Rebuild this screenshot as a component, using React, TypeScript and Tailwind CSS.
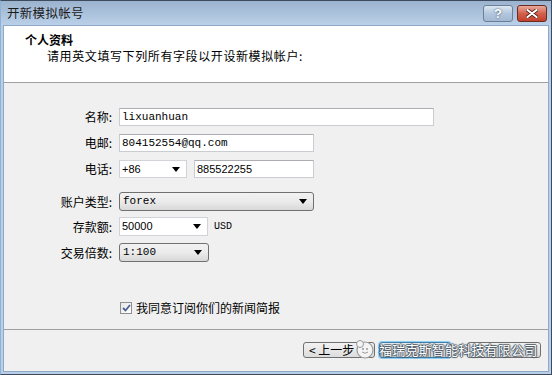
import React from "react";

const cjk = { fontFamily: '"Noto Sans CJK SC", "Liberation Sans", sans-serif' };
const mono = { fontFamily: '"Liberation Mono", "DejaVu Sans Mono", monospace' };
const sans = { fontFamily: '"Liberation Sans", Arial, sans-serif' };

function Arrow() {
  return (
    <svg width="8" height="5" viewBox="0 0 8 5" className="shrink-0">
      <path d="M0 0 H8 L4 5 Z" fill="#000" />
    </svg>
  );
}

function Label({ children }: { children: React.ReactNode }) {
  return (
    <div className="w-[109px] pr-[1px] text-right text-[12px] leading-none text-[#000]" style={cjk}>
      {children}
    </div>
  );
}

function TextBox({ w, value, font }: { w: string; value: string; font: React.CSSProperties }) {
  return (
    <div
      className={`${w} h-[18px] bg-white border border-[#c9ccd1] border-t-[#abadb3] flex items-center pl-[2px] text-[11px] text-black`}
      style={font}
    >
      {value}
    </div>
  );
}

function Combo({ w, value }: { w: string; value: string }) {
  return (
    <div
      className={`${w} h-[19px] bg-white border border-[#d0d3d8] flex items-center pl-[2px] pr-[6px] text-[11px] text-black`}
      style={sans}
    >
      <span className="flex-1">{value}</span>
      <Arrow />
    </div>
  );
}

function DropList({ w, value }: { w: string; value: string }) {
  return (
    <div
      className={`${w} h-[19px] rounded-[3px] border border-[#707070] bg-gradient-to-b from-[#f2f2f2] via-[#ebebeb] to-[#d8d8d8] flex items-center pl-[3px] pr-[6px] text-[11px] text-black`}
      style={mono}
    >
      <span className="flex-1">{value}</span>
      <Arrow />
    </div>
  );
}

function Button({ children, focused, w }: { children?: React.ReactNode; focused?: boolean; w: string }) {
  return (
    <div
      className={`${w} h-[16px] rounded-[3px] border ${
        focused ? "border-[#3c7fb1] shadow-[0_0_0_1px_#8fd0f4]" : "border-[#707070]"
      } bg-gradient-to-b from-[#f2f2f2] to-[#dddddd] flex items-center justify-center text-[12px] leading-none text-black`}
      style={cjk}
    >
      {children}
    </div>
  );
}

export default function App() {
  return (
    <div className="w-[552px] h-[375px] bg-[#b9cfe7] border border-[#3d4b5c] border-l-[#8fb1d6] flex flex-col overflow-hidden">
      {/* 标题栏 */}
      <div className="h-[24px] shrink-0 bg-gradient-to-b from-[#9cb3cf] to-[#bad0e8] flex items-center pl-[6px] pr-[4px]">
        <span className="text-[12.5px] text-[#1a1a1a] tracking-[0.3px]" style={cjk}>
          开新模拟帐号
        </span>
        <div className="ml-auto flex gap-[4px] pt-[1px]">
          <div className="w-[30px] h-[17px] rounded-[3px] border border-[#6d7f96] bg-gradient-to-b from-[#dce7f3] via-[#b3c7de] to-[#a2b9d3] flex items-center justify-center text-[13px] font-bold text-white [text-shadow:0_0_2px_#2c3d52]" style={sans}>
            ?
          </div>
          <div className="w-[30px] h-[17px] rounded-[3px] border border-[#6b2a22] bg-gradient-to-b from-[#e9a99b] via-[#d2614c] to-[#c2402c] flex items-center justify-center">
            <svg width="12" height="9" viewBox="0 0 12 9">
              <path d="M1.5 1 L10.5 8 M10.5 1 L1.5 8" stroke="#4a1810" strokeWidth="3.6" strokeLinecap="round" />
              <path d="M1.5 1 L10.5 8 M10.5 1 L1.5 8" stroke="#fff" strokeWidth="2.2" strokeLinecap="round" />
            </svg>
          </div>
        </div>
      </div>

      {/* 客户区 */}
      <div className="flex-1 ml-[2px] mr-[2px] mb-[2px] border border-[#8ea9c8] bg-[#f0f0f0] flex flex-col">
        {/* 头部 */}
        <div className="h-[57px] shrink-0 bg-white border-b border-[#a0a0a0] pt-[5px]">
          <div className="pl-[21px] text-[12px] font-bold leading-[17px] text-black" style={cjk}>
            个人资料
          </div>
          <div className="pl-[43px] text-[12px] leading-[15px] tracking-[0.6px] text-black" style={cjk}>
            请用英文填写下列所有字段以开设新模拟帐户:
          </div>
        </div>

        {/* 表单 */}
        <div className="flex-1 pt-[25px] flex flex-col">
          <div className="flex items-center gap-[6px]">
            <Label>名称:</Label>
            <TextBox w="w-[315px]" value="lixuanhuan" font={mono} />
          </div>
          <div className="flex items-center gap-[6px] mt-[8px]">
            <Label>电邮:</Label>
            <TextBox w="w-[195px]" value="804152554@qq.com" font={mono} />
          </div>
          <div className="flex items-center gap-[6px] mt-[8px]">
            <Label>电话:</Label>
            <div className="flex items-center gap-[7px]">
              <div className="w-[68px] h-[18px] bg-white border border-[#d0d3d8] flex items-center pl-[2px] pr-[6px] text-[11px]" style={sans}>
                <span className="flex-1">+86</span>
                <Arrow />
              </div>
              <TextBox w="w-[120px]" value="885522255" font={sans} />
            </div>
          </div>

          <div className="flex items-center gap-[6px] mt-[14px]">
            <Label>账户类型:</Label>
            <DropList w="w-[195px]" value="forex" />
          </div>
          <div className="flex items-center gap-[6px] mt-[6px]">
            <Label>存款额:</Label>
            <Combo w="w-[89px]" value="50000" />
            <span className="text-[10px] text-black" style={mono}>
              USD
            </span>
          </div>
          <div className="flex items-center gap-[6px] mt-[7px]">
            <Label>交易倍数:</Label>
            <DropList w="w-[90px]" value="1:100" />
          </div>

          <div className="flex items-center mt-[40px] pl-[116px] gap-[4px]">
            <div className="w-[12px] h-[12px] border border-[#8e8f8f] bg-gradient-to-br from-[#e6e6e6] to-[#ffffff] flex items-center justify-center">
              <svg width="9" height="8" viewBox="0 0 9 8">
                <path d="M1 4 L3.5 6.5 L8 1" stroke="#4a5f97" strokeWidth="1.8" fill="none" />
              </svg>
            </div>
            <span className="text-[12px] leading-none text-black" style={cjk}>
              我同意订阅你们的新闻简报
            </span>
          </div>
        </div>

        {/* 底部按钮 */}
        <div className="h-[42px] shrink-0 border-t border-[#a0a0a0] relative flex items-start pt-[12px] pl-[299px] gap-[4px]">
          <Button w="w-[72px]">
            <span className="mr-auto pl-[5px]">&lt; 上一步</span>
          </Button>
          <Button w="w-[72px]" focused />
          <div className="w-[8px]" />
          <Button w="w-[74px]" />

          {/* 水印 */}
          <div className="absolute left-[350px] top-[8px] flex items-center gap-[3px] pointer-events-none">
            <svg width="22" height="22" viewBox="0 0 22 22">
              <circle cx="11" cy="12" r="8" fill="#f4f4f4" stroke="#9a9a9a" strokeWidth="1.2" />
              <circle cx="6" cy="6" r="3.5" fill="#f4f4f4" stroke="#9a9a9a" strokeWidth="1" />
              <circle cx="9" cy="11" r="1" fill="#9a9a9a" />
              <circle cx="13" cy="11" r="1" fill="#9a9a9a" />
              <path d="M8 14 Q11 16.5 14 14" stroke="#9a9a9a" strokeWidth="1" fill="none" />
            </svg>
            <span
              className="text-[13px] leading-none text-white tracking-[0.2px] [text-shadow:0_0_1px_#4d5a66,1px_0_1px_#4d5a66,-1px_0_1px_#4d5a66,0_1px_1px_#4d5a66,0_-1px_1px_#4d5a66]"
              style={cjk}
            >
              福瑞克斯智能科技有限公司
            </span>
          </div>
        </div>
      </div>
    </div>
  );
}
